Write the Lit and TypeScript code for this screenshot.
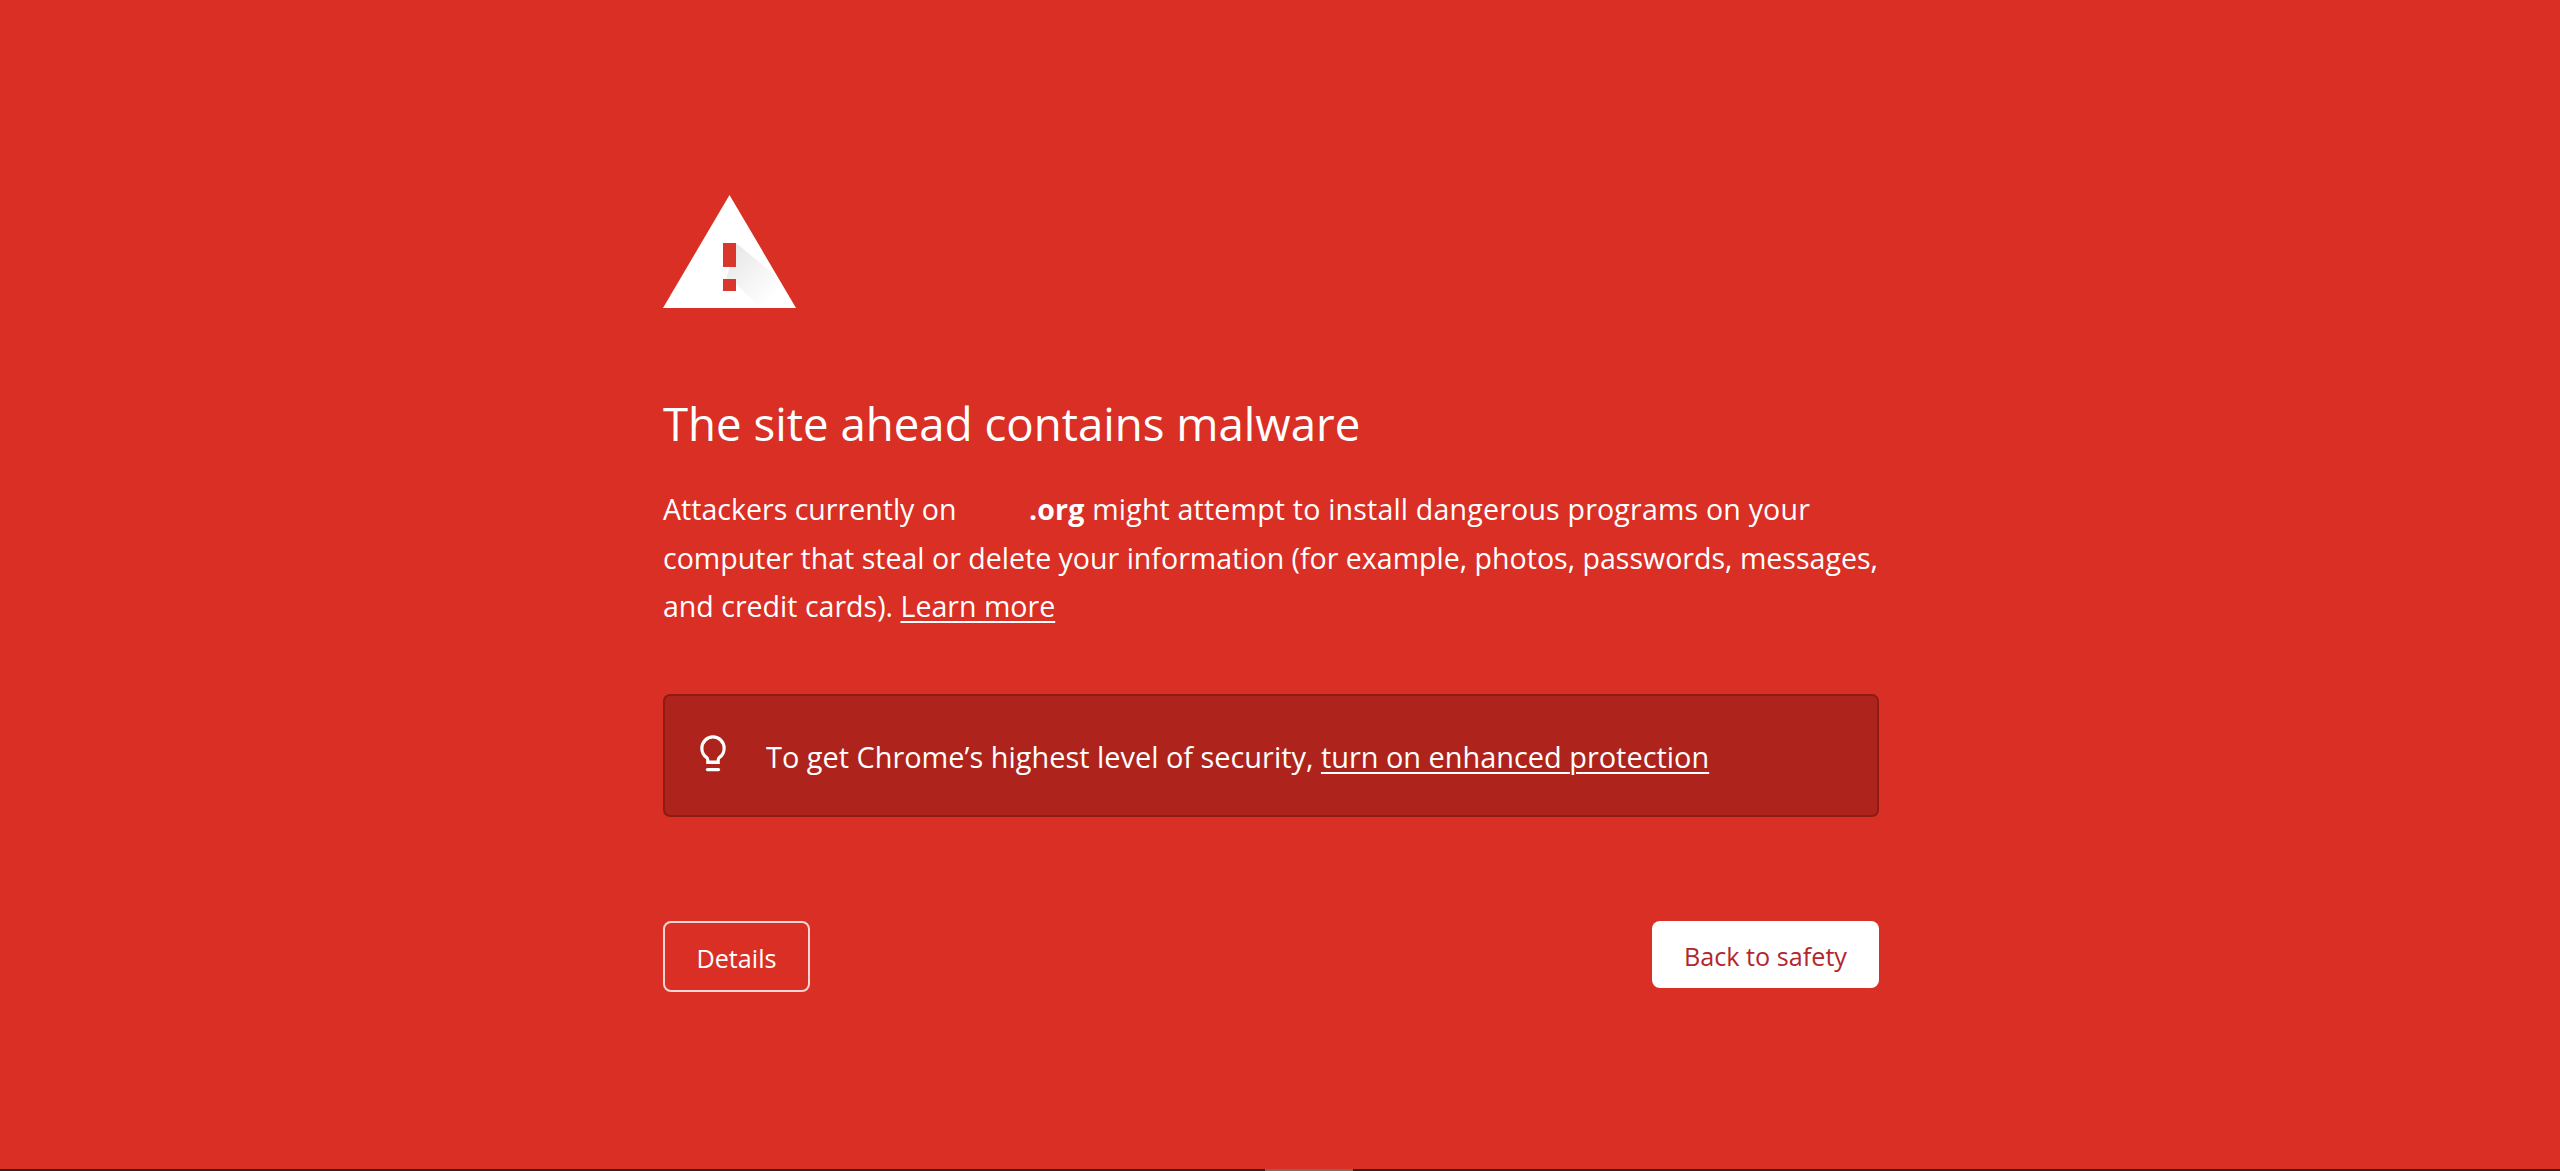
import { LitElement, html, css } from "lit";
import { customElement } from "lit/decorators.js";

@customElement("app-root")
export class AppRoot extends LitElement {
  static styles = css`
    :host { display: flex; flex-direction: column; height: 1171px; background: #d92f25; color: #fff; font-family: "Open Sans", "Noto Sans", sans-serif; overflow: hidden; }
    .main { flex: 1; padding: 194px 681px 0 663px; box-sizing: border-box; min-height: 0; }
    .warn { display: block; width: 134px; height: 115px; }
    h1 { margin: 83px 0 0; font-size: 45.6px; font-weight: 400; line-height: 62px; }
    p { margin: 31px -30px 0 0; font-size: 28.55px; line-height: 48.5px; }
    a { color: inherit; text-decoration: underline; text-underline-offset: 4px; text-decoration-thickness: 2px; }
    .gap { display: inline-block; width: 65px; }
    .tail { letter-spacing: 0.19px; }
    .tip { display: flex; align-items: center; margin-top: 63px; height: 123px; box-sizing: border-box; padding: 0 35px; background: #ae241c; border: 2px solid #8e1a14; border-radius: 7px; font-size: 28.9px; }
    .tip span { padding-top: 3px; }
    .bulb { width: 26px; height: 37px; margin: -3px 40px 0 0; flex: none; }
    .actions { display: flex; justify-content: space-between; align-items: flex-start; margin-top: 104px; }
    .btn { display: flex; align-items: center; justify-content: center; box-sizing: border-box; font: inherit; font-size: 25.2px; border-radius: 8px; padding: 3px 0 0; }
    .details { width: 147px; height: 71px; background: transparent; color: #fff; border: 2px solid #f8d5d2; }
    .back { width: 227px; height: 67px; background: #fff; color: #b3262e; border: none; }
    .strip { display: flex; height: 2px; flex: none; background: #33201f; }
    .strip i { margin-left: 1265px; width: 88px; background: #85685f; }
  `;
  render() {
    return html`
      <div class="main">
        <svg class="warn" viewBox="0 0 134 115" aria-hidden="true">
          <defs><linearGradient id="s" gradientUnits="userSpaceOnUse" x1="66" y1="60" x2="110" y2="104"><stop offset="0" stop-color="#e4e4e4"/><stop offset="1" stop-color="#fff"/></linearGradient></defs>
          <path d="M66.5 1 133 114H0z" fill="#fff"/>
          <path d="M73 49l39 32 19 32H97L73 90V85L60 97z" fill="url(#s)" opacity=".85"/>
          <path d="M60 49h13v24H60zM60 85h13v12H60z" fill="#d9372e"/>
        </svg>
        <h1>The site ahead contains malware</h1>
        <p>Attackers currently on <span class="gap"></span><span class="tail"><b>.org</b> might attempt to install dangerous programs on your</span> computer that steal or delete your information (for example, photos, passwords, messages, and credit cards). <a href="#">Learn more</a></p>
        <div class="tip">
          <svg class="bulb" viewBox="0 0 28 38" preserveAspectRatio="none" fill="none" stroke="#fff" stroke-width="3.4" aria-hidden="true">
            <path d="M14 2C7.4 2 2 7.2 2 13.6c0 4 2 7.4 5 9.4.9.6 1.4 1.6 1.4 2.7V28h11.2v-2.3c0-1.1.5-2.1 1.4-2.7 3-2 5-5.4 5-9.4C26 7.2 20.6 2 14 2z"/>
            <path d="M8 35.5h12" stroke-linecap="round"/>
          </svg>
          <span>To get Chrome’s highest level of security, <a href="#">turn on enhanced protection</a></span>
        </div>
        <div class="actions">
          <button class="btn details">Details</button>
          <button class="btn back">Back to safety</button>
        </div>
      </div>
      <div class="strip"><i></i></div>
    `;
  }
}
